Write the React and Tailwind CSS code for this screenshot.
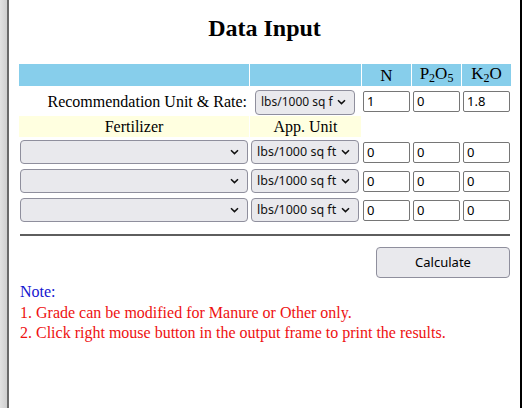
import React from 'react';

const serif = { fontFamily: '"Liberation Serif", "Times New Roman", serif' };
const sans = { fontFamily: '"Noto Sans", "Open Sans", sans-serif' };

const Chevron = () => (
    <svg width="9" height="6" viewBox="0 0 9 6" className="pointer-events-none absolute top-1/2 -translate-y-1/2 right-[8px]">
        <path d="M1 1.2 L4.5 4.6 L8 1.2" fill="none" stroke="#111" strokeWidth="1.5" />
    </svg>
);

const Select = ({ value, className }) => (
    <div
        className={`relative flex items-center bg-[#e9e9ed] border border-[#8f8f9d] rounded-[4px] text-[#111] pl-[5px] pr-[18px] whitespace-nowrap ${className}`}
        style={sans}
    >
        <span className="flex-1 min-w-0">{value}</span>
        <Chevron />
    </div>
);

const NumInput = ({ value }) => (
    <input
        defaultValue={value}
        className="w-[47px] h-[21px] ml-px border border-[#767676] rounded-[2px] bg-white px-[3px] text-[13px] text-black outline-none"
        style={sans}
    />
);

const Sub = ({ children }) => <span className="text-[12px] relative top-[4px]">{children}</span>;

const FertRow = () => (
    <>
        <div className="h-[28px] flex items-center">
            <Select value="" className="w-[228px] h-[24px] ml-px text-[12.5px]" />
        </div>
        <div className="h-[28px] flex items-center">
            <Select value="lbs/1000 sq ft" className="w-[108px] h-[24px] ml-px text-[12.5px]" />
        </div>
        <div className="h-[28px] flex items-center"><NumInput value="0" /></div>
        <div className="h-[28px] flex items-center"><NumInput value="0" /></div>
        <div className="h-[28px] flex items-center"><NumInput value="0" /></div>
    </>
);

export default function App() {
    return (
        <div className="flex w-[525px] h-[408px] bg-white overflow-hidden">
            {/* frame edge */}
            <div className="w-[7px] h-full bg-gradient-to-r from-[#e2e2e2] to-[#cfcfcf]" />
            <div className="w-[2px] h-full bg-[#6a6a6a]" />

            <div className="w-[511px] h-full flex flex-col text-black" style={serif}>
                <h2 className="pt-[15px] text-center text-[24px] leading-[27px] font-bold">Data Input</h2>

                <div className="mt-[22px] pl-[10px]">
                    <div className="grid grid-cols-[230px_111px_49px_49px_49px] gap-px text-[16px]">
                        {/* header */}
                        <div className="h-[22px] bg-[#87ceeb]" />
                        <div className="h-[22px] bg-[#87ceeb]" />
                        <div className="h-[22px] bg-[#87ceeb] flex items-center justify-center leading-none text-[17px]">N</div>
                        <div className="h-[22px] bg-[#87ceeb] flex items-center justify-center leading-none text-[17px] pb-[3px]">
                            P<Sub>2</Sub>O<Sub>5</Sub>
                        </div>
                        <div className="h-[22px] bg-[#87ceeb] flex items-center justify-center leading-none text-[17px] pb-[3px]">
                            K<Sub>2</Sub>O
                        </div>

                        {/* recommendation */}
                        <div className="h-[28px] flex items-center justify-end pr-[2px] pt-[2px]">Recommendation Unit &amp; Rate:</div>
                        <div className="h-[28px] flex items-center">
                            <Select value="lbs/1000 sq f" className="w-[100px] h-[25px] ml-[5px] mt-[2px] text-[12px]" />
                        </div>
                        <div className="h-[28px] flex items-center"><NumInput value="1" /></div>
                        <div className="h-[28px] flex items-center"><NumInput value="0" /></div>
                        <div className="h-[28px] flex items-center"><NumInput value="1.8" /></div>

                        {/* fertilizer header */}
                        <div className="h-[21px] bg-[#ffffe0] flex items-center justify-center">Fertilizer</div>
                        <div className="h-[21px] bg-[#ffffe0] flex items-center justify-center">App. Unit</div>
                        <div className="h-[21px]" />
                        <div className="h-[21px]" />
                        <div className="h-[21px]" />

                        <FertRow />
                        <FertRow />
                        <FertRow />
                    </div>

                    <div className="mt-[10px] ml-px w-[490px] h-[2px] bg-[#5e5e5e]" />

                    <div className="flex justify-end w-[491px] mt-[11px]">
                        <button
                            className="w-[134px] h-[31px] bg-[#e9e9ed] border border-[#8f8f9d] rounded-[4px] text-[13px] text-black"
                            style={sans}
                        >
                            Calculate
                        </button>
                    </div>

                    <div className="mt-[4px] ml-px text-[16px] leading-[20.5px]">
                        <div className="text-[#1515d0]">Note:</div>
                        <div className="text-[#ee1111]">1. Grade can be modified for Manure or Other only.</div>
                        <div className="text-[#ee1111]">2. Click right mouse button in the output frame to print the results.</div>
                    </div>
                </div>
            </div>

            <div className="w-[2px] h-full bg-black" />
        </div>
    );
}
